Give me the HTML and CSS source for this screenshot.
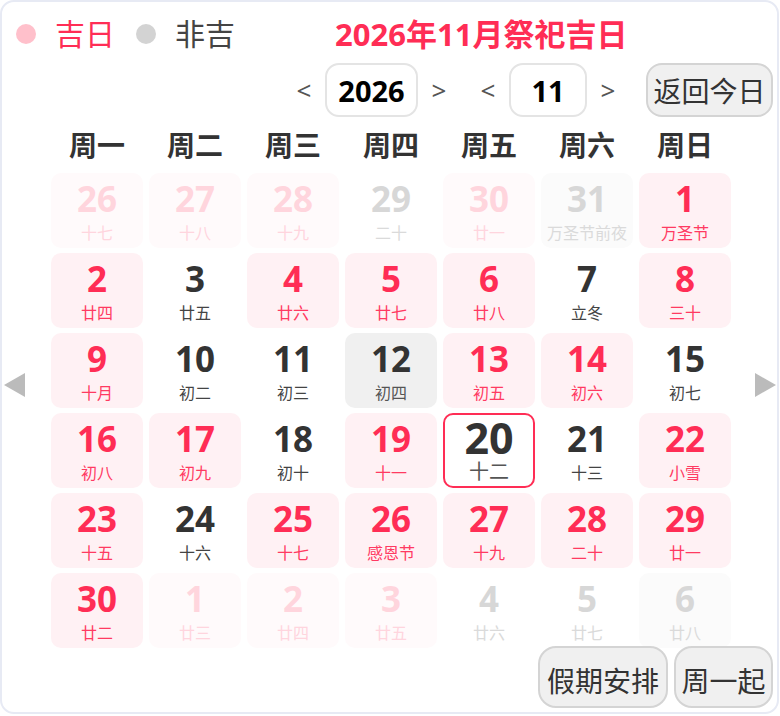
FILE: index.html
```html
<!DOCTYPE html>
<html lang="zh-CN">
<head>
<meta charset="utf-8">
<title>2026年11月祭祀吉日</title>
<link rel="stylesheet" href="styles.css">
</head>
<body>
<div class="card">
  <div class="top">
    <span class="dot dot-lucky"></span><span class="legend-text lucky-text">吉日</span>
    <span class="dot dot-plain"></span><span class="legend-text plain-text">非吉</span>
    <span class="title">2026年11月祭祀吉日</span>
  </div>
  <div class="nav">
    <div class="group">
      <span class="nav-arrow">&lt;</span>
      <span class="numbox year">2026</span>
      <span class="nav-arrow">&gt;</span>
    </div>
    <div class="group">
      <span class="nav-arrow">&lt;</span>
      <span class="numbox month">11</span>
      <span class="nav-arrow">&gt;</span>
    </div>
    <button class="btn today-btn">返回今日</button>
  </div>
  <div class="main">
    <div class="side side-left">
      <svg class="tri" width="21" height="24" viewBox="0 0 21 24"><polygon points="0,12 21,0 21,24" fill="#bbbbbb"/></svg>
    </div>
    <div class="content">
      <div class="weekdays">
        <span>周一</span><span>周二</span><span>周三</span><span>周四</span><span>周五</span><span>周六</span><span>周日</span>
      </div>
      <div class="grid">
        <div class="cell other-lucky"><span class="num">26</span><span class="lunar">十七</span></div>
        <div class="cell other-lucky"><span class="num">27</span><span class="lunar">十八</span></div>
        <div class="cell other-lucky"><span class="num">28</span><span class="lunar">十九</span></div>
        <div class="cell other"><span class="num">29</span><span class="lunar">二十</span></div>
        <div class="cell other-lucky"><span class="num">30</span><span class="lunar">廿一</span></div>
        <div class="cell other shaded"><span class="num">31</span><span class="lunar">万圣节前夜</span></div>
        <div class="cell lucky"><span class="num">1</span><span class="lunar">万圣节</span></div>

        <div class="cell lucky"><span class="num">2</span><span class="lunar">廿四</span></div>
        <div class="cell"><span class="num">3</span><span class="lunar">廿五</span></div>
        <div class="cell lucky"><span class="num">4</span><span class="lunar">廿六</span></div>
        <div class="cell lucky"><span class="num">5</span><span class="lunar">廿七</span></div>
        <div class="cell lucky"><span class="num">6</span><span class="lunar">廿八</span></div>
        <div class="cell"><span class="num">7</span><span class="lunar">立冬</span></div>
        <div class="cell lucky"><span class="num">8</span><span class="lunar">三十</span></div>

        <div class="cell lucky"><span class="num">9</span><span class="lunar">十月</span></div>
        <div class="cell"><span class="num">10</span><span class="lunar">初二</span></div>
        <div class="cell"><span class="num">11</span><span class="lunar">初三</span></div>
        <div class="cell hover"><span class="num">12</span><span class="lunar">初四</span></div>
        <div class="cell lucky"><span class="num">13</span><span class="lunar">初五</span></div>
        <div class="cell lucky"><span class="num">14</span><span class="lunar">初六</span></div>
        <div class="cell"><span class="num">15</span><span class="lunar">初七</span></div>

        <div class="cell lucky"><span class="num">16</span><span class="lunar">初八</span></div>
        <div class="cell lucky"><span class="num">17</span><span class="lunar">初九</span></div>
        <div class="cell"><span class="num">18</span><span class="lunar">初十</span></div>
        <div class="cell lucky"><span class="num">19</span><span class="lunar">十一</span></div>
        <div class="cell today"><span class="num">20</span><span class="lunar">十二</span></div>
        <div class="cell"><span class="num">21</span><span class="lunar">十三</span></div>
        <div class="cell lucky"><span class="num">22</span><span class="lunar">小雪</span></div>

        <div class="cell lucky"><span class="num">23</span><span class="lunar">十五</span></div>
        <div class="cell"><span class="num">24</span><span class="lunar">十六</span></div>
        <div class="cell lucky"><span class="num">25</span><span class="lunar">十七</span></div>
        <div class="cell lucky"><span class="num">26</span><span class="lunar">感恩节</span></div>
        <div class="cell lucky"><span class="num">27</span><span class="lunar">十九</span></div>
        <div class="cell lucky"><span class="num">28</span><span class="lunar">二十</span></div>
        <div class="cell lucky"><span class="num">29</span><span class="lunar">廿一</span></div>

        <div class="cell lucky"><span class="num">30</span><span class="lunar">廿二</span></div>
        <div class="cell other-lucky"><span class="num">1</span><span class="lunar">廿三</span></div>
        <div class="cell other-lucky"><span class="num">2</span><span class="lunar">廿四</span></div>
        <div class="cell other-lucky"><span class="num">3</span><span class="lunar">廿五</span></div>
        <div class="cell other"><span class="num">4</span><span class="lunar">廿六</span></div>
        <div class="cell other"><span class="num">5</span><span class="lunar">廿七</span></div>
        <div class="cell other shaded"><span class="num">6</span><span class="lunar">廿八</span></div>
      </div>
    </div>
    <div class="side side-right">
      <svg class="tri" width="21" height="24" viewBox="0 0 21 24"><polygon points="21,12 0,0 0,24" fill="#bbbbbb"/></svg>
    </div>
  </div>
  <div class="footer">
    <button class="btn fbtn holiday-btn">假期安排</button>
    <button class="btn fbtn week-btn">周一起</button>
  </div>
</div>
</body>
</html>
```

FILE: styles.css
```css
* {
  box-sizing: border-box;
  margin: 0;
  padding: 0;
}

html, body {
  background: #ffffff;
}

body {
  margin: 0;
  font-family: "Noto Sans", "Noto Sans CJK SC", sans-serif;
  color: #333333;
}

.card {
  width: 779px;
  height: 714px;
  border: 2px solid #e7eaf4;
  border-radius: 14px;
  background: #ffffff;
  overflow: hidden;
}

/* top legend + title */
.top {
  display: flex;
  align-items: center;
  height: 44px;
  margin-top: 10px;
  padding-left: 14px;
}

.dot {
  width: 20px;
  height: 20px;
  border-radius: 50%;
  flex: none;
}

.dot-lucky {
  background: #ffc0cb;
}

.dot-plain {
  background: #d3d3d3;
  margin-left: 21px;
}

.legend-text {
  font-size: 30px;
  line-height: 44px;
  margin-left: 19px;
}

.lucky-text {
  color: #ff2d55;
}

.plain-text {
  color: #444444;
}

.title {
  margin-left: 100px;
  font-size: 31px;
  font-weight: bold;
  line-height: 44px;
  color: #ff2d55;
}

/* navigation row */
.nav {
  display: flex;
  justify-content: flex-end;
  align-items: center;
  height: 54px;
  margin-top: 7px;
  padding-right: 4px;
}

.group {
  display: flex;
  align-items: center;
  gap: 7px;
  margin-right: 21px;
}

.group + .group {
  margin-right: 24px;
}

.nav-arrow {
  width: 28px;
  text-align: center;
  font-size: 26px;
  line-height: 54px;
  color: #555555;
}

.numbox {
  height: 54px;
  border: 2px solid #e4e4e4;
  border-radius: 14px;
  display: flex;
  align-items: center;
  justify-content: center;
  font-size: 29px;
  font-weight: bold;
  color: #000000;
}

.year {
  width: 93px;
}

.month {
  width: 78px;
}

.btn {
  font-family: "Noto Sans", "Noto Sans CJK SC", sans-serif;
  background: #f0f0f0;
  border: 2px solid #d4d4d4;
  color: #333333;
  font-size: 28px;
  display: flex;
  align-items: center;
  justify-content: center;
}

.today-btn {
  width: 127px;
  height: 54px;
  border-radius: 16px;
}

/* main area */
.main {
  display: flex;
  align-items: center;
}

.side {
  display: flex;
  align-items: center;
  padding-top: 5px;
}

.side-left {
  width: 49px;
  padding-left: 2px;
}

.side-right {
  flex: 1;
  padding-left: 24px;
}

.tri {
  display: block;
}

.content {
  width: 680px;
}

.weekdays {
  display: grid;
  grid-template-columns: repeat(7, 92px);
  column-gap: 6px;
  height: 56px;
  font-size: 28px;
  font-weight: bold;
  line-height: 56px;
  text-align: center;
  color: #333333;
}

.grid {
  display: grid;
  grid-template-columns: repeat(7, 92px);
  grid-auto-rows: 75px;
  column-gap: 6px;
  row-gap: 5px;
}

.cell {
  border-radius: 10px;
  display: flex;
  flex-direction: column;
  align-items: center;
  padding-top: 8px;
  color: #333333;
}

.num {
  font-size: 35px;
  font-weight: bold;
  line-height: 36px;
}

.lunar {
  font-size: 16px;
  line-height: 20px;
  margin-top: 6px;
  color: #444444;
  white-space: nowrap;
}

.lucky {
  background: #fff1f4;
}

.lucky .num {
  color: #ff2d55;
}

.lucky .lunar {
  color: #ff3a62;
}

.other-lucky {
  background: #fffafb;
}

.other-lucky .num {
  color: #ffd5dd;
}

.other-lucky .lunar {
  color: #ffd5de;
}

.other .num {
  color: #d7d7d7;
}

.other .lunar {
  color: #dadada;
}

.shaded {
  background: #fbfbfb;
}

.hover {
  background: #f0f0f0;
}

.hover .lunar {
  color: #555555;
}

.today {
  border: 2px solid #ff2d55;
  background: #ffffff;
  padding-top: 1px;
}

.today .num {
  font-size: 43px;
  line-height: 44px;
}

.today .lunar {
  font-size: 20px;
  line-height: 22px;
  margin-top: 1px;
  color: #555555;
}

/* footer */
.footer {
  display: flex;
  justify-content: flex-end;
  gap: 6px;
  padding-right: 4px;
  margin-top: -2px;
}

.fbtn {
  height: 62px;
  border-radius: 18px;
  padding-top: 6px;
}

.holiday-btn {
  width: 130px;
}

.week-btn {
  width: 99px;
}
```
